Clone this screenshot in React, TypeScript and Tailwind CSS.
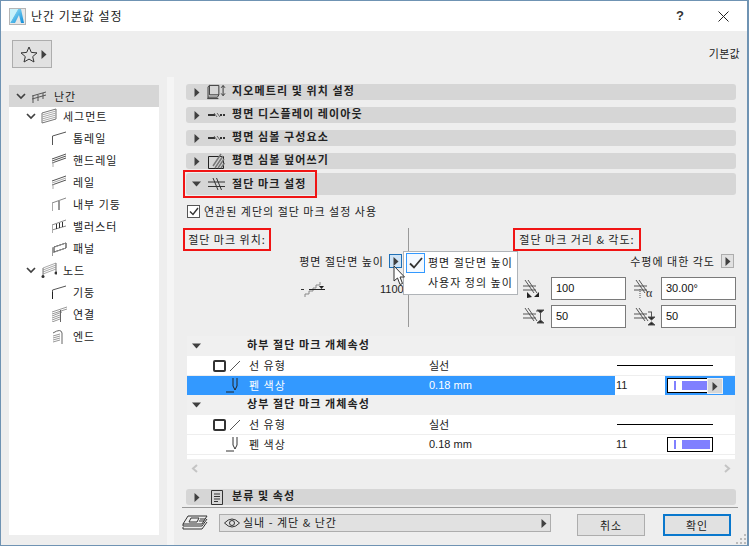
import React from "react";

const Tri = ({ c = "#404040", className = "" }: { c?: string; className?: string }) => (
  <svg width="6" height="9" viewBox="0 0 6 9" className={className}><path d="M0.5 0 L5.5 4.5 L0.5 9 Z" fill={c} /></svg>
);
const Down = () => (
  <svg width="9" height="6" viewBox="0 0 9 6"><path d="M0 0.5 H9 L4.5 5.5 Z" fill="#404040" /></svg>
);
const Chev = () => (
  <svg width="10" height="7" viewBox="0 0 10 7"><path d="M1 1 L5 5 L9 1" fill="none" stroke="#404040" strokeWidth="1.7" /></svg>
);

const ico = "#555";
const num = { fontFamily: '"Liberation Sans",sans-serif' };
const TreeIcon = ({ k }: { k: string }) => {
  const s = { fill: "none", stroke: ico, strokeWidth: 1 } as const;
  const w = 16, h = 16;
  let body: React.ReactNode = null;
  if (k === "root")
    body = <g {...s}><path d="M1 8 L15 4 M1 11 L15 7 M2 8 V15 M7 7 V13 M12 5 V11" /></g>;
  else if (k === "seg")
    body = <g {...s}><path d="M1 5 L15 1 V11 L1 15 Z" stroke="#777" /><path d="M1 7 L15 3 M1 9 L15 5 M1 11 L15 7 M1 13 L15 9" stroke="#aaa" /></g>;
  else if (k === "top")
    body = <g {...s}><path d="M1.5 15 V6 L15 2" /></g>;
  else if (k === "hand")
    body = <g {...s}><path d="M1 7 L15 2 M1 9 L15 4 M1 11 L15 6" /><path d="M2 10 V15" stroke="#aaa" /></g>;
  else if (k === "rail")
    body = <g {...s}><path d="M1 7 L15 2 M1 11 L15 6" /><path d="M2 10 V15" stroke="#aaa" /><path d="M1 9 L15 4" stroke="#aaa" /></g>;
  else if (k === "inner")
    body = <g {...s}><path d="M1 7 L15 2" stroke="#888" /><path d="M1.5 7 V15" stroke="#aaa" /><path d="M8 5 V14" stroke="#333" /></g>;
  else if (k === "bal")
    body = <g {...s}><path d="M1 7 L15 2 M1 12 L15 8" stroke="#888" /><path d="M1.5 7 V15" stroke="#aaa" /><path d="M5.5 6 V11 M8.5 5 V10 M11.5 4 V9" stroke="#333" /></g>;
  else if (k === "panel")
    body = <g {...s}><path d="M3 7 L15 3 V8 L3 12 Z" stroke="#222" /><path d="M1 8 L15 3 M1 13 L15 8 M1.5 8 V16" stroke="#999" /></g>;
  else if (k === "node")
    body = <g {...s}><path d="M2 6 L15 1 M2 8 L15 3 M2 10 L15 5 M2 12 L15 7" stroke="#aaa" /><path d="M2 6 V15 M15 1 V11" stroke="#777" /><circle cx="2" cy="14.5" r="1.5" fill="#333" stroke="none" /><circle cx="15" cy="11" r="1.5" fill="#333" stroke="none" /></g>;
  else if (k === "col")
    body = <g {...s}><path d="M1.5 15 V6 L15 2" /><path d="M1.5 8 V15" stroke="#222" /></g>;
  else if (k === "conn")
    body = <g {...s}><path d="M1 6 L16 1 M1 8 L16 3 M1 10 L11 6 M1 12 L9 9 M1 14 L9 11 M1 16 L9 13" stroke="#999" /><path d="M9.5 4 V17" stroke="#666" /></g>;
  else if (k === "end")
    body = <g {...s}><path d="M2 5 Q10 0 11 5 V16" stroke="#666" /><path d="M2 8 L9 6 M2 10 L9 8 M2 12 L9 10 M2 14 L9 12" stroke="#999" /></g>;
  return <svg width={w} height={h} viewBox={`0 0 ${w} ${h}`} className="shrink-0">{body}</svg>;
};

const tree: { t: string; lvl: number; k: string; chev?: boolean }[] = [
  { t: "세그먼트", lvl: 1, k: "seg", chev: true },
  { t: "톱레일", lvl: 2, k: "top" },
  { t: "핸드레일", lvl: 2, k: "hand" },
  { t: "레일", lvl: 2, k: "rail" },
  { t: "내부 기둥", lvl: 2, k: "inner" },
  { t: "밸러스터", lvl: 2, k: "bal" },
  { t: "패널", lvl: 2, k: "panel" },
  { t: "노드", lvl: 1, k: "node", chev: true },
  { t: "기둥", lvl: 2, k: "col" },
  { t: "연결", lvl: 2, k: "conn" },
  { t: "엔드", lvl: 2, k: "end" },
];

const GeoIcon = () => (
  <svg width="19" height="16" viewBox="0 0 20 17" fill="none" stroke="#333"><path d="M2.5 1.5 H12.5 V11.5 H2.5 Z M2.5 1.5 L1 3 V14 H11 L12.5 11.5 M1 14 L0.5 15.5 H12" /><path d="M17 2 V12 M15 4 L17 1.5 L19 4 M15 10 L17 12.5 L19 10" /></svg>
);
const DashIcon = () => (
  <svg width="17" height="8" viewBox="0 0 17 8" fill="none" stroke="#333"><path d="M0 4 H7" strokeWidth="2" /><path d="M6 2 L9 6 M9 2 L12 6" stroke="#666" /><path d="M12 4 H17" strokeDasharray="2 1" strokeWidth="2" /></svg>
);
const OverIcon = () => (
  <svg width="17" height="16" viewBox="0 0 17 16" fill="none"><path d="M0.5 3.5 H15.5 V15.5 H0.5 Z" stroke="#222" /><path d="M7 15 L15 3 M10 15 L16 6 M13 15 L16.5 10 M5 13 L13 1" stroke="#777" strokeWidth="1.5" /></svg>
);
const CutIcon = () => (
  <svg width="17" height="14" viewBox="0 0 17 14" fill="none" stroke="#333"><path d="M0 5 H17 M0 9.5 H17" /><path d="M5 1 L10 13 M8.5 1 L13.5 13" /></svg>
);
const Bar = ({ open, icon, label, tall }: { open?: boolean; icon: React.ReactNode; label: string; tall?: boolean }) => (
  <div className={`flex items-center bg-[#d6d6d6] rounded-[3px] ${tall ? "h-[22px]" : "h-4"}`}>
    <div className="w-[21px] flex justify-center shrink-0">{open ? <Down /> : <Tri />}</div>
    <div className="flex justify-center shrink-0 w-[19px]">{icon}</div>
    <span className={`ml-[6px] font-bold text-[11px] tracking-[1.1px] text-[#222] whitespace-nowrap ${tall ? "pb-[2px]" : "pb-[3px]"}`}>{label}</span>
  </div>
);

const Field = ({ v }: { v: string }) => (
  <div className="w-[75px] h-[23px] border border-[#7a7a7a] bg-white flex items-center pl-1 text-[11px] text-[#111] shrink-0">{v}</div>
);

const MarkIcon = ({ kind }: { kind: number }) => (
  <svg width="22" height="20" viewBox="0 0 22 20" fill="none" stroke="#555" className="shrink-0">
    <path d="M0 7 H13 M0 11 H13" />
    <path d="M2 1 L11 14 M5 1 L14 14" />
    {kind === 0 && <path d="M4 13 L9 18 L4 19 Z M11 18 L16 13 L16 18 Z" fill="#222" stroke="none" />}
    {kind === 1 && <path d="M14 3 H21 L17.5 6 Z M14 16 H21 L17.5 13 Z M17.5 6 V13 M13 4 H15" fill="#222" />}
    {kind === 2 && <g><path d="M6 10 V19" strokeDasharray="1 1" /><text x="12" y="18" fontSize="12" fill="#333" stroke="none" fontFamily="Liberation Serif">α</text></g>}
    {kind === 3 && <path d="M14 10 H21 L17.5 13 Z M14 18 H21 L17.5 15 Z M17.5 5 V10 M14 5 H18" fill="#222" />}
  </svg>
);

const Pen = ({ sel }: { sel?: boolean }) => (
  <div className="relative w-[46px] h-[15px] border border-black bg-white flex items-center pl-[6px] gap-[6px]">
    <div className="w-[2px] h-[9px] bg-[#8080ff]" />
    <div className={`h-[9px] bg-[#8080ff] ${sel ? "w-[25px]" : "w-[28px]"}`} />
    {sel && (
      <div className="absolute right-[-11px] top-[-1px] w-4 h-4 bg-[#d6d6d6] border border-[#f0f0f0] flex items-center justify-center"><Tri /></div>
    )}
  </div>
);

const Rows = ({ title, sel }: { title: string; sel?: boolean }) => (
  <>
    <div className="h-5 flex items-center">
      <div className="w-[21px] pl-[5px] flex"><Down /></div>
      <div className="w-[39px]" />
      <span className="font-bold text-[11px] tracking-[1.1px] text-[#222] pb-[3px]">{title}</span>
    </div>
    <div className="h-[19px] bg-white flex items-center text-[11px] text-[#222]">
      <div className="w-[26px]" />
      <div className="w-[13px] h-3 border-2 border-[#333] rounded-[2px]" />
      <svg width="12" height="12" viewBox="0 0 12 12" className="ml-[3px]"><path d="M1 11 L11 1" stroke="#555" /></svg>
      <span className="ml-[8px] w-[180px] tracking-[1px] pb-px">선 유형</span>
      <span className="pb-px">실선</span>
      <div className="ml-auto w-[96px] h-px bg-black mr-[22px]" />
    </div>
    <div className="h-px bg-[#eeeeee]" />
    <div className={`h-[19px] flex items-center text-[11px] ${sel ? "bg-[#3399ff] text-white" : "bg-white text-[#222]"}`}>
      <svg width="14" height="15" viewBox="0 0 14 15" className="ml-[39px]" fill="none" stroke={sel ? "#222" : "#333"}><path d="M7 0 V8 L9 12 L11 8 V0 M0 14 H8" /></svg>
      <span className="ml-[9px] w-[180px] tracking-[1px] pb-px">펜 색상</span>
      <span className="w-[186px]" style={num}>0.18 mm</span>
      <div className="w-[50px] h-full bg-white text-[#222] flex items-center pl-px" style={num}>11</div>
      <div className="ml-[2px]"><Pen sel={sel} /></div>
    </div>
  </>
);

export default function App() {
  return (
    <div className="w-[749px] h-[546px] border border-[#6f93b3] border-r-2 bg-[#eeeeee] flex flex-col overflow-hidden text-[#222]" style={{ fontFamily: '"Noto Sans CJK KR","Liberation Sans",sans-serif' }}>
      <div className="h-[30px] bg-white flex items-center shrink-0">
        <svg width="17" height="17" viewBox="0 0 17 17" className="ml-2">
          <defs><linearGradient id="g" x1="0" y1="0" x2="1" y2="1"><stop offset="0" stopColor="#9fe8fb" /><stop offset="1" stopColor="#0d8bd8" /></linearGradient></defs>
          <rect x="0.5" y="0.5" width="16" height="16" fill="#e8e8e8" stroke="#b5b5b5" />
          <path d="M1 15 L9 1 H12 L15 15 H12 L10 7 L6 15 Z" fill="url(#g)" />
          <path d="M1 15 L1 1 H9 Z" fill="#c8f2fb" />
        </svg>
        <span className="ml-[5px] text-xs tracking-[1px] text-[#222] pb-px">난간 기본값 설정</span>
        <span className="ml-auto text-[13px] font-bold mr-[34px] text-[#333]" style={num}>?</span>
        <svg width="11" height="11" viewBox="0 0 11 11" className="mr-[18px]"><path d="M0.5 0.5 L10.5 10.5 M10.5 0.5 L0.5 10.5" stroke="#222" /></svg>
      </div>

      <div className="h-[46px] flex items-start shrink-0 relative">
        <div className="ml-[11px] mt-[9px] w-10 h-7 bg-[#e1e1e1] border border-[#adadad] flex items-center pl-[7px] gap-[3px]">
          <svg width="18" height="17" viewBox="0 0 18 17" fill="none" stroke="#333"><path d="M9 1 L11.3 6.4 L17 6.9 L12.7 10.6 L14 16 L9 13.1 L4 16 L5.3 10.6 L1 6.9 L6.7 6.4 Z" /></svg>
          <Tri />
        </div>
        <span className="ml-auto mr-[7px] mt-[14px] text-[11px] tracking-[0.3px] text-[#222]">기본값</span>
      </div>

      <div className="flex-1 flex min-h-0">
        <div className="w-[150px] ml-2 mt-2 h-[450px] bg-white shrink-0 text-[11px] tracking-[1px] text-[#222]">
          <div className="h-[22px] bg-[#d6d6d6] flex items-center pl-[7px]">
            <Chev />
            <div className="ml-[5px]"><TreeIcon k="root" /></div>
            <span className="ml-[7px]">난간</span>
          </div>
          <div className="-mt-[2px]">
            {tree.map((r) => (
              <div key={r.t} className="h-[22px] flex items-center" style={{ paddingLeft: r.lvl === 1 ? 17 : 42 }}>
                {r.chev && <Chev />}
                <div className={r.chev ? "ml-[5px]" : ""}><TreeIcon k={r.k} /></div>
                <span className="ml-[6px]">{r.t}</span>
              </div>
            ))}
          </div>
        </div>
        <div className="w-[7px] ml-2 bg-[#f5f5f5] shrink-0" />
        <div className="flex-1 min-w-0 relative">
          <div className="ml-3 mr-[11px] mt-[7px] flex flex-col gap-[7px]">
            <Bar icon={<GeoIcon />} label="지오메트리 및 위치 설정" />
            <Bar icon={<DashIcon />} label="평면 디스플레이 레이아웃" />
            <Bar icon={<DashIcon />} label="평면 심볼 구성요소" />
            <Bar icon={<OverIcon />} label="평면 심볼 덮어쓰기" />
          </div>
          <div className="ml-3 mr-[11px] mt-1 relative">
            <Bar open icon={<CutIcon />} label="절단 마크 설정" tall />
            <div className="absolute left-[-3px] top-[-3px] w-[134px] h-[28px] border-2 border-[#f01414]" />
          </div>

          <div className="ml-[13px] mt-[10px] h-[13px] flex items-center">
            <div className="w-[13px] h-[13px] border border-[#555] bg-white flex items-center justify-center">
              <svg width="10" height="9" viewBox="0 0 10 9"><path d="M1 4.5 L4 7.5 L9 1" fill="none" stroke="#333" strokeWidth="1.4" /></svg>
            </div>
            <span className="ml-1 text-[11px] tracking-[1px]">연관된 계단의 절단 마크 설정 사용</span>
          </div>

          <div className="ml-[9px] mr-3 mt-[10px] flex h-[99px] relative">
            <div className="w-[225px] shrink-0 text-[11px] tracking-[1px]">
              <div className="w-[88px] h-[23px] border-2 border-[#f01414] flex items-center justify-center whitespace-nowrap">절단 마크 위치:</div>
              <div className="mt-[3px] h-[14px] flex items-center justify-end pr-[6px]">
                <span className="mr-[5px] whitespace-nowrap">평면 절단면 높이</span>
                <div className="w-[13px] h-[14px] border border-[#1e6fb5] bg-[#cfe3f5] flex items-center justify-center shrink-0"><Tri /></div>
              </div>
              <div className="mt-[13px] flex items-start pl-[118px]">
                <svg width="24" height="17" viewBox="0 0 24 17" fill="none" stroke="#888" className="shrink-0">
                  <path d="M4 16 V13 H8 V10 H12 V7 H15 V4 H19 V1" />
                  <path d="M0 8.5 H3" stroke="#333" /><path d="M8 8.5 H24" stroke="#222" /><path d="M18 5 H23 L20.5 8 Z" fill="#222" stroke="none" />
                </svg>
                <span className="ml-[55px] leading-4 tracking-normal" style={num}>1100</span>
              </div>
            </div>
            <div className="w-px bg-[#999] shrink-0" />
            <div className="flex-1 text-[11px] tracking-[1px] min-w-0">
              <div className="ml-[104px] w-[128px] h-[23px] border-2 border-[#f01414] flex items-center justify-center whitespace-nowrap">절단 마크 거리 &amp; 각도:</div>
              <div className="mt-[3px] h-[14px] flex items-center justify-end pr-px">
                <span className="mr-[6px] whitespace-nowrap">수평에 대한 각도</span>
                <div className="w-[13px] h-[14px] border border-[#adadad] bg-[#e1e1e1] flex items-center justify-center shrink-0"><Tri /></div>
              </div>
              <div className="mt-[9px] flex flex-col gap-[5px] pl-[114px] tracking-normal" style={num}>
                <div className="flex items-center">
                  <MarkIcon kind={0} />
                  <div className="ml-[6px]"><Field v="100" /></div>
                  <div className="ml-[8px]"><MarkIcon kind={2} /></div>
                  <div className="ml-[5px]"><Field v="30.00°" /></div>
                </div>
                <div className="flex items-center">
                  <MarkIcon kind={1} />
                  <div className="ml-[6px]"><Field v="50" /></div>
                  <div className="ml-[8px]"><MarkIcon kind={3} /></div>
                  <div className="ml-[5px]"><Field v="50" /></div>
                </div>
              </div>
            </div>

            <div className="absolute left-[220px] top-[23px] w-[115px] h-[44px] bg-white border border-[#b0b4b8] text-[11px] tracking-[1px] pl-[2px] pt-[1px]">
              <div className="h-5 flex items-center">
                <div className="w-[19px] h-[20px] border border-[#3399ff] bg-[#f4f9ff] flex items-center justify-center shrink-0">
                  <svg width="14" height="12" viewBox="0 0 14 12"><path d="M1 6.5 L5 10.5 L13 1" fill="none" stroke="#333" strokeWidth="1.8" /></svg>
                </div>
                <span className="ml-[3px] pb-[2px] whitespace-nowrap">평면 절단면 높이</span>
              </div>
              <div className="h-5 flex items-center pl-[22px] pb-[2px] whitespace-nowrap">사용자 정의 높이</div>
            </div>
            <svg width="13" height="21" viewBox="0 0 13 21" className="absolute left-[210px] top-[37px]"><path d="M1 1 V16 L4.5 13 L7 19.5 L9.5 18.5 L7 12 L11.5 12 Z" fill="white" stroke="#333" /></svg>
          </div>

          <div className="ml-[13px] mr-3 mt-[9px] h-[124px] bg-[#f0f0f0]">
            <Rows title="하부 절단 마크 개체속성" sel />
            <Rows title="상부 절단 마크 개체속성" />
            <div className="h-px bg-[#eeeeee]" />
            <div className="h-[4px] bg-white" />
          </div>
          <div className="ml-[13px] mr-3 mt-[3px] h-[10px] flex items-center justify-between px-1">
            <svg width="7" height="9" viewBox="0 0 7 9"><path d="M6 1 L2 4.5 L6 8" fill="none" stroke="#c4c4c4" strokeWidth="2" /></svg>
            <svg width="7" height="9" viewBox="0 0 7 9"><path d="M1 1 L5 4.5 L1 8" fill="none" stroke="#c4c4c4" strokeWidth="2" /></svg>
          </div>

          <div className="ml-3 mr-[11px] mt-[16px]">
            <Bar icon={
              <svg width="12" height="15" viewBox="0 0 12 15" fill="none" stroke="#333"><path d="M0.5 0.5 H11.5 V14.5 H0.5 Z M3 4 H9 M3 6.5 H9 M3 9 H9 M3 11.5 H7" /></svg>
            } label="분류 및 속성" />
          </div>
          <div className="ml-2 mr-[9px] mt-[2px] h-px bg-[#999]" />
          <div className="ml-2 mr-[16px] mt-[6px] flex items-start">
            <svg width="26" height="16" viewBox="0 0 26 16" fill="none" stroke="#333" className="mt-[1px] shrink-0">
              <path d="M1 9 L6 1 H25 L20 9 Z M9 3 L7 7 H15 L17 3 Z M18 4 H23 M17 6 H22" />
              <path d="M1 9 V11 H20 L25 4 M1 12 V14 H20 L25 7" />
            </svg>
            <div className="ml-[11px] w-[332px] h-[18px] bg-[#e1e1e1] border border-[#adadad] flex items-center pl-1 text-[11px] tracking-[1px]">
              <svg width="16" height="10" viewBox="0 0 16 10" fill="none" stroke="#333"><path d="M0.5 5 Q8 -3 15.5 5 Q8 13 0.5 5 Z" /><circle cx="8" cy="5" r="2.5" /></svg>
              <span className="ml-[3px] pb-px">실내 - 계단 &amp; 난간</span>
              <Tri className="ml-auto mr-[3px]" />
            </div>
            <button className="ml-[26px] w-[68px] h-[22px] bg-[#e1e1e1] border border-[#adadad] text-[11px] tracking-[1px]">취소</button>
            <button className="ml-[18px] w-[68px] h-[22px] bg-[#e1e1e1] border-2 border-[#0a78cd] text-[11px] tracking-[1px]">확인</button>
          </div>
          <svg width="12" height="12" viewBox="0 0 12 12" className="absolute right-0 bottom-0" fill="#bbb">
            <rect x="9" y="1" width="2" height="2" /><rect x="5" y="5" width="2" height="2" /><rect x="9" y="5" width="2" height="2" />
            <rect x="1" y="9" width="2" height="2" /><rect x="5" y="9" width="2" height="2" /><rect x="9" y="9" width="2" height="2" />
          </svg>
        </div>
      </div>
    </div>
  );
}
